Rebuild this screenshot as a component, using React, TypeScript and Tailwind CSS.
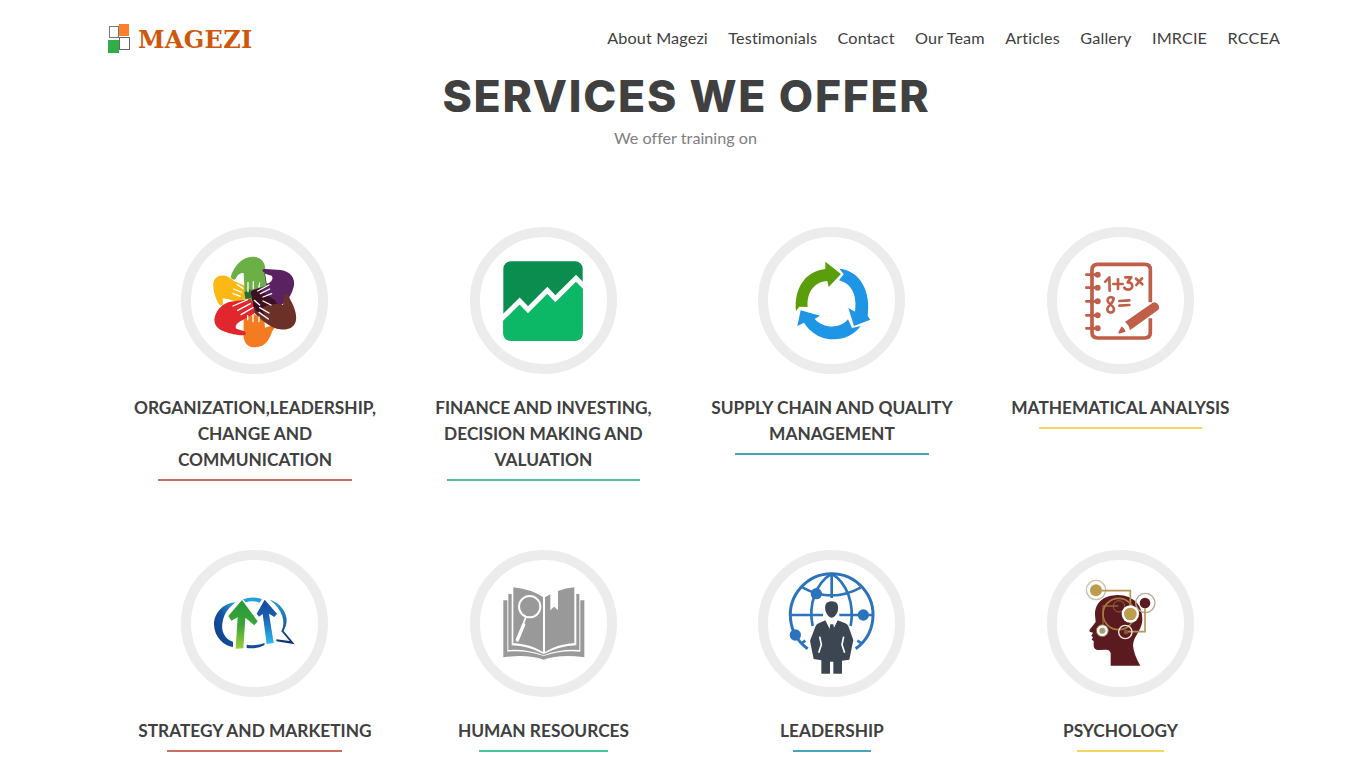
import React from "react";

const Hands = () => (
  <>
    <path fill="#fdb813" d="M178 182C150 152 112 166 117 200C119 220 125 240 137 256L146 252L145 234L160 236L190 246L222 232L212 196L178 182Z" />
    <path fill="#6ab045" d="M169 171C176 145 198 110 234 109C263 109 274 130 273 152L277 200L270 236L240 246L212 236L208 158C196 157 188 165 184 176Q176 182 169 171Z" />
    <path fill="#5b2261" d="M264 150Q266 145 274 146L308 148C342 148 363 168 359 195C354 222 338 246 318 256L256 238L228 222L232 210L276 196C296 184 298 172 288 165L272 158Q264 155 264 150Z" />
    <path fill="#5b2261" d="M270 158L300 160V200L262 208L276 196Z" />
    <path fill="#f47b20" d="M208 296L240 282L270 298L272 322L286 318L304 310Q306 318 294 332C286 354 276 380 242 381C214 381 204 358 208 330Z" />
    <path fill="#6b3027" d="M333 222Q342 220 346 234C356 254 370 278 364 304C358 322 340 330 318 327C298 324 278 312 262 298L238 276L236 240L252 232L300 250L326 254C330 246 326 228 333 222Z" />
    <path fill="#e1262d" d="M228 236L242 258L238 282L204 300C186 308 180 320 186 325L210 333Q218 338 212 344C200 347 170 342 148 333C124 325 115 304 123 285C130 264 146 250 168 244Z" />
    <path fill="#3c1020" d="M228 214L254 204L274 222L302 240L308 250L280 254L262 264L272 286L254 280L238 262Z" />
    <path fill="#2d6b35" d="M210 216L228 206L232 232L214 236Z" />
    <path fill="#fff" d="M272 160L292 166Q300 176 284 188L277 190L274 170Z" />
    <g stroke="#fff" strokeWidth="4" strokeLinecap="round">
      <path d="M221 186V214M237 184V204M256 188L254 200M188 192L206 204M178 206L202 216M176 220L198 228M284 194L250 212M286 206L258 220M292 220L266 230M176 257L220 238M190 270L228 250M200 283L236 262M220 286V298M236 284V304M254 290V304M240 240L256 254M256 262L284 278M254 276L282 296M266 242L290 254" />
    </g>
  </>
);

const Chart = () => (
  <>
    <rect x="120" y="123" width="238" height="238" rx="22" fill="#0b8d4f" />
    <path fill="#0cb766" d="M120 292L169 244L193 268L252 211L276 235L338 176L358 194V339Q358 361 336 361H142Q120 361 120 339Z" />
    <path fill="none" stroke="#fff" strokeWidth="15" d="M114 296L169 242L194 268L252 210L276 235L338 174L364 200" />
  </>
);

const Cycle = () => (
  <>
    <path fill="#5a9e0c" d="M134 272C128 214 154 154 222 146V124L269 161L232 200L228 182C190 184 166 214 169 260L144 259Z" />
    <path fill="#1f95e6" d="M264 145C326 150 360 214 349 287L357 298L308 317L291 263L311 274C318 226 302 190 263 180L277 162Z" />
    <path fill="#1f95e6" d="M148 270L206 286L190 296C216 324 264 328 290 297L302 323L328 317C290 370 200 374 158 307L138 317Z" />
  </>
);

const Notebook = () => (
  <g stroke="#c05f49" fill="none" strokeLinecap="round" strokeLinejoin="round">
    <path strokeWidth="11" strokeLinecap="butt" d="M330 246V148Q330 132 314 132H172Q155 132 155 149V336Q155 353 172 353H314Q330 353 330 336V294" />
    <path strokeWidth="8" d="M138 163H170M138 202H170M138 243H170M138 285H170M138 324H170" />
    <g fill="#c05f49" stroke="none">
      <circle cx="172" cy="163" r="9" /><circle cx="172" cy="202" r="9" /><circle cx="172" cy="243" r="9" />
      <circle cx="172" cy="285" r="9" /><circle cx="172" cy="324" r="9" />
      <path d="M254 305L337 247Q347 242 354 253Q360 264 352 270L269 330Q266 314 254 305Z" />
      <path d="M244 318Q254 326 256 334L236 340Q232 338 236 332Z" />
    </g>
    <path strokeWidth="8" d="M195 184L207 171L208 211M219 191H247M233 177V206M255 171H273L262 186C280 185 280 207 264 208Q255 208 252 202M287 175L306 192M305 174L288 194" />
    <path strokeWidth="8" d="M220 234C212 226 201 232 202 242C204 252 220 254 221 266C221 280 201 280 201 267C201 255 220 250 220 234M237 242L267 240M237 256L267 254" />
  </g>
);

const Arrows = () => (
  <>
    <defs>
      <linearGradient id="swoosh" x1="0" y1="1" x2="1" y2="0"><stop stopColor="#123a86" /><stop offset=".55" stopColor="#1352a0" /><stop offset="1" stopColor="#2eaee4" /></linearGradient>
      <linearGradient id="up-green" x1="0" y1="0" x2="0" y2="1"><stop stopColor="#279a3c" /><stop offset=".5" stopColor="#3aa535" /><stop offset="1" stopColor="#9acb3c" /></linearGradient>
      <linearGradient id="up-blue" x1="0" y1="0" x2="0" y2="1"><stop stopColor="#16479a" /><stop offset=".4" stopColor="#1b5fb0" /><stop offset="1" stopColor="#29bdf0" /></linearGradient>
      <linearGradient id="tail" x1="0" y1="0" x2="0" y2="1"><stop stopColor="#27a2dd" /><stop offset="1" stopColor="#122c70" /></linearGradient>
    </defs>
    <path fill="url(#swoosh)" d="M184 177C150 178 119 208 119 243C120 282 148 308 176 311V295C150 286 139 262 145 235C150 209 164 192 184 177Z" />
    <path fill="#259fd8" d="M206 168Q234 158 263 167L256 178Q234 170 214 177Z" />
    <path fill="#154a94" d="M217 304Q246 309 271 299L270 306Q246 318 217 314Z" />
    <path fill="url(#tail)" d="M288 169C324 182 344 216 335 246L328 263L361 303L306 294V288L346 293L321 264C336 238 324 198 288 171Z" />
    <path fill="url(#up-green)" d="M203 170L250 234L240 246L213 223L207 315L184 316L190 222L171 232L162 218Z" />
    <path fill="url(#up-blue)" d="M271 169L308 211L300 221L284 211L298 299L277 302L265 212L254 220L247 211Z" />
  </>
);

const Book = () => (
  <>
    <path fill="#999" d="M120 171H132V325Q190 320 241 338Q292 320 351 325V171H363V342Q290 332 241 349Q192 332 120 342Z" />
    <path fill="#999" d="M135 152H145V306Q196 308 241 332Q288 308 339 306V152H348V320Q290 316 241 336Q190 316 135 320Z" />
    <path fill="#999" d="M150 132Q206 138 239 162V326Q202 302 150 299Z" />
    <path fill="#999" d="M245 162L261 153V201L272 190L284 201V143Q306 134 333 132V299Q282 302 245 326Z" />
    <circle cx="199" cy="190" r="32" fill="none" stroke="#fff" strokeWidth="6" />
    <path d="M187 222L180 242" stroke="#fff" strokeWidth="5" />
    <path d="M181 244L162 290" stroke="#fff" strokeWidth="10" strokeLinecap="round" />
  </>
);

const Globe = () => (
  <>
    <g fill="none" stroke="#2b74bd" strokeWidth="8">
      <path strokeWidth="9" d="M169 316A124 124 0 1 1 313 316" />
      <path d="M116 215H215M264 215H365M241 92V164M154 133Q241 180 328 133M241 91C194 120 170 182 184 248M241 91C288 120 310 182 298 248" />
      <path d="M150 300L162 292M331 300L318 292" />
    </g>
    <g fill="#2b74bd"><circle cx="195" cy="151" r="17" /><circle cx="336" cy="215" r="17" /><circle cx="132" cy="275" r="17" /></g>
    <g fill="#3c4653">
      <path d="M241 174C258 174 263 186 259 204C255 216 247 223 241 223C235 223 227 216 223 204C218 186 224 174 241 174Z" />
      <path d="M222 231L240 266L259 231L282 240Q290 243 292 251L306 290L294 349L272 352V391H246V355H236V391H210V351L187 347L176 293L192 250Q195 243 202 240Z" />
    </g>
    <path fill="#fff" d="M224 231H258L241 268Z" />
    <path fill="#3c4653" d="M237 243H246L249 260L241 272L234 260Z" />
    <path fill="none" stroke="#fff" strokeWidth="5" d="M205 280L210 304L202 328M277 280L272 304L280 328" />
  </>
);

const Mind = () => (
  <>
    <path fill="#5a1a20" d="M164 214C164 174 194 156 232 155C282 156 308 188 306 231C304 262 280 278 278 306Q280 334 300 367H211V329Q208 319 198 319L172 320Q160 319 160 306V293L154 289L158 282L153 278L158 268L148 265Q146 262 149 258L166 236Z" />
    <circle cx="167" cy="140" r="29" fill="#fff" stroke="#c9c0aa" strokeWidth="4" />
    <circle cx="167" cy="141" r="18" fill="#bd9c50" />
    <circle cx="315" cy="179" r="29" fill="none" stroke="#b9ab96" strokeWidth="4" />
    <circle cx="314" cy="179" r="16" fill="#5a1a20" />
    <g fill="none" stroke="#b79655" strokeWidth="5">
      <path d="M184 142H270V190M314 194V265H257" />
      <path strokeWidth="4" stroke="#936238" d="M234 188H188V250" />
      <circle cx="235" cy="212" r="47" stroke="#a7793f" />
      <circle cx="236" cy="189" r="17" strokeWidth="3" stroke="#936238" />
    </g>
    <circle cx="270" cy="212" r="26" fill="#fff" />
    <circle cx="270" cy="212" r="19" fill="#bd9c50" />
    <circle cx="255" cy="266" r="20" fill="none" stroke="#f5e9dd" strokeWidth="4" />
    <circle cx="257" cy="266" r="7" fill="#8b552f" />
    <circle cx="186" cy="262" r="18" fill="#fff" stroke="#8b6148" strokeWidth="3" />
    <circle cx="186" cy="262" r="9" fill="#a79b70" />
  </>
);

const services = [
  { title: "ORGANIZATION,LEADERSHIP, CHANGE AND COMMUNICATION", Icon: Hands, line: "after:bg-[#c9705c]" },
  { title: "FINANCE AND INVESTING, DECISION MAKING AND VALUATION", Icon: Chart, line: "after:bg-[#48c69b]" },
  { title: "SUPPLY CHAIN AND QUALITY MANAGEMENT", Icon: Cycle, line: "after:bg-[#48a5c0]" },
  { title: "MATHEMATICAL ANALYSIS", Icon: Notebook, line: "after:bg-[#f5d75f]" },
  { title: "STRATEGY AND MARKETING", Icon: Arrows, line: "after:bg-[#c9705c]" },
  { title: "HUMAN RESOURCES", Icon: Book, line: "after:bg-[#48c69b]" },
  { title: "LEADERSHIP", Icon: Globe, line: "after:bg-[#48a5c0]" },
  { title: "PSYCHOLOGY", Icon: Mind, line: "after:bg-[#f5d75f]" },
];

const links = ["About Magezi", "Testimonials", "Contact", "Our Team", "Articles", "Gallery", "IMRCIE", "RCCEA"];

export default function App() {
  return (
    <div className="h-screen overflow-hidden bg-white font-['Lato',sans-serif] text-[#404040] [font-variant-ligatures:none]">
      <header className="flex h-[76px] items-center justify-between pl-[107px] pr-[86px]">
        <a className="flex items-center">
          <svg className="h-[32px] w-[24px]" viewBox="0 0 24 32">
            <rect x="2.5" y="4.5" width="9" height="11" fill="#fff" stroke="#777" />
            <rect x="12" y="2" width="10" height="12" fill="#fb7f2c" />
            <rect x="12.5" y="15.5" width="10" height="12" fill="#fff" stroke="#666" />
            <rect x="1" y="18" width="11" height="13" fill="#2fae4a" />
          </svg>
          <span className="ml-[7px] pt-[3px] font-['DejaVu_Serif',serif] text-[24px] font-bold leading-none tracking-[0.3px] text-[#cf570c]">MAGEZI</span>
        </a>
        <nav className="flex gap-[20.5px] text-[16.2px] leading-6 tracking-[0.13px]">
          {links.map((l) => <a key={l}>{l}</a>)}
        </nav>
      </header>
      <main className="flex flex-col items-center">
        <h1 className="ml-[7px] font-['Inter',sans-serif] text-[44.5px] font-extrabold leading-[40px] tracking-[1.75px]">SERVICES WE OFFER</h1>
        <p className="ml-[5px] mt-[10px] text-[16.2px] leading-6 text-[#808080]">We offer training on</p>
        <section className="ml-[9.4px] mt-[76.5px] grid w-[1154px] auto-rows-[323px] grid-cols-4">
          {services.map(({ title, Icon, line }) => (
            <article key={title} className="flex flex-col items-center px-[15px] text-center">
              <div className="h-[147px] w-[147px] shrink-0 rounded-full border-[10px] border-[#ececec]">
                <svg className="h-[127px] w-[127px]" viewBox="50 50 381 381"><Icon /></svg>
              </div>
              <h2 className={`mt-[21px] flex flex-col items-center text-[17.3px] font-bold leading-[26px] after:mt-[6.5px] after:h-[2px] after:w-3/4 after:content-[''] ${line}`}>{title}</h2>
            </article>
          ))}
        </section>
      </main>
    </div>
  );
}
